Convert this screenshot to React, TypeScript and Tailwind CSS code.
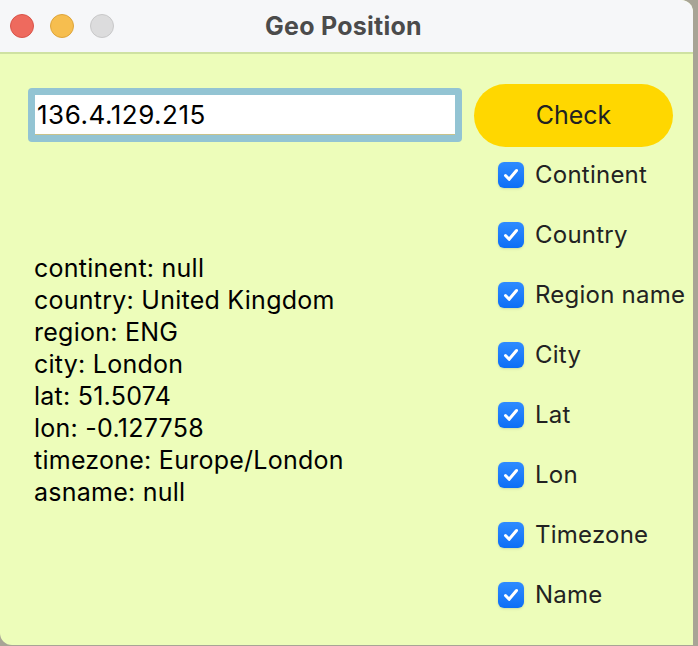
import { useState } from "react"

const fields = ["Continent", "Country", "Region name", "City", "Lat", "Lon", "Timezone", "Name"]

const info = [
    "continent: null",
    "country: United Kingdom",
    "region: ENG",
    "city: London",
    "lat: 51.5074",
    "lon: -0.127758",
    "timezone: Europe/London",
    "asname: null",
]

const CheckBox = ({ checked, onClick }: { checked: boolean; onClick: () => void }) => {
    return (
        <button
            type="button"
            onClick={onClick}
            className={`w-[26px] h-[26px] rounded-[6px] flex items-center justify-center shrink-0 ${checked ? "bg-gradient-to-b from-[#2e8cff] to-[#0a6ef5] shadow-sm" : "bg-white border border-gray-400"}`}
        >
            {checked && (
                <svg width="18" height="18" viewBox="0 0 18 18" fill="none">
                    <path d="M3.5 9.5l3.6 3.8L14.5 4.5" stroke="white" strokeWidth="3" strokeLinecap="round" strokeLinejoin="round" />
                </svg>
            )}
        </button>
    )
}

const App = () => {
    const [ip, setIp] = useState("136.4.129.215")
    const [checked, setChecked] = useState<boolean[]>(fields.map(() => true))

    return (
        <div className="w-[698px] h-[646px] bg-[#a8a496] font-['Inter',sans-serif]">
            <div className="w-[693px] h-[645px] rounded-tr-[12px] rounded-bl-[12px] overflow-hidden bg-[#edfdba] flex flex-col">
                {/* title bar */}
                <div className="h-[54px] shrink-0 bg-[#f6f7f9] border-b-2 border-[#cfe2a2] flex items-center relative">
                    <div className="flex gap-[16px] pl-[10px]">
                        <span className="w-[24px] h-[24px] rounded-full bg-[#ee6a5e] border border-[#d9544a]"></span>
                        <span className="w-[24px] h-[24px] rounded-full bg-[#f6be4f] border border-[#dea53b]"></span>
                        <span className="w-[24px] h-[24px] rounded-full bg-[#dcdcdd] border border-[#c8c8c9]"></span>
                    </div>
                    <h1 className="absolute left-0 right-[6px] text-center text-[25px] font-bold tracking-[0.01em] text-[#4b4b4b] leading-none">Geo Position</h1>
                </div>

                <div className="flex pt-[30px]">
                    <div className="w-[434px] ml-[28px] flex flex-col">
                        <div className="mt-[4px] h-[54px] rounded-[4px] bg-[#93c4d3] p-[7px]">
                            <input
                                value={ip}
                                onChange={(e) => setIp(e.target.value)}
                                className="w-full h-full bg-white px-[2px] text-[26px] tracking-[0.02em] text-black outline-none border-b border-[#c8c28a]"
                            />
                        </div>
                        <div className="mt-[110px] pl-[6px] text-[25px] tracking-[0.01em] leading-[32px] text-black">
                            {info.map((line) => (
                                <p key={line}>{line}</p>
                            ))}
                        </div>
                    </div>

                    <div className="ml-[12px] w-[199px] flex flex-col">
                        <button className="h-[63px] rounded-full bg-[#ffd700] text-[25px] text-[#222]">Check</button>
                        <ul className="mt-[15px] pl-[24px] flex flex-col gap-[34px]">
                            {fields.map((f, i) => (
                                <li key={f} className="flex items-center gap-[11px] h-[26px] whitespace-nowrap">
                                    <CheckBox
                                        checked={checked[i]}
                                        onClick={() => setChecked(checked.map((c, j) => (j === i ? !c : c)))}
                                    />
                                    <span className="text-[24px] tracking-[0.01em] text-[#222] leading-none">{f}</span>
                                </li>
                            ))}
                        </ul>
                    </div>
                </div>
            </div>
        </div>
    )
}

export default App
